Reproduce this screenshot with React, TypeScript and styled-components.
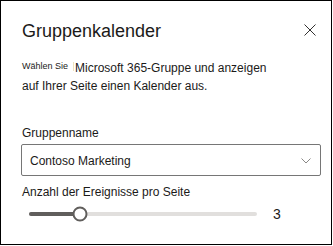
import React from "react";
import styled, { createGlobalStyle } from "styled-components";

const Global = createGlobalStyle`
  html, body { margin: 0; padding: 0; background: #fff; }
  body { font-family: "Liberation Sans", Arial, sans-serif; color: #1b1a19; }
`;

const Panel = styled.div`
  box-sizing: border-box;
  width: 332px;
  height: 245px;
  border: 1px solid #000;
  padding: 19px 10px 0 20px;
  display: flex;
  flex-direction: column;
`;

const Header = styled.div`
  display: flex;
  align-items: center;
  justify-content: space-between;
  height: 22px;
`;

const Title = styled.h1`
  margin: 0;
  font-size: 18px;
  line-height: 22px;
  font-weight: 400;
  color: #1b1a19;
  padding-left: 1px;
`;

const CloseButton = styled.button`
  width: 20px;
  height: 20px;
  border: 0;
  padding: 0;
  margin: -2px 1px 0 0;
  background: transparent;
  display: flex;
  align-items: center;
  justify-content: center;
  color: #323130;
`;

const Description = styled.div`
  margin: 17px 0 0 0;
  padding-left: 1px;
  width: 260px;
  font-size: 12px;
  line-height: 18px;
`;

const FirstLine = styled.div`
  display: flex;
  align-items: flex-start;
  height: 18px;
`;

const Small = styled.span`
  font-size: 9px;
  line-height: 9px;
  margin-top: 3px;
`;

const Caret = styled.span`
  width: 1px;
  height: 9px;
  background: #eee3c0;
  margin: 3px 1px 0 5px;
`;

const Label = styled.div<{ $top: number }>`
  margin-top: ${(p) => p.$top}px;
  font-size: 12px;
  line-height: 16px;
  padding-left: 1px;
`;

const Dropdown = styled.div`
  box-sizing: border-box;
  margin-top: 3px;
  height: 32px;
  border: 1px solid #767676;
  border-radius: 2px;
  display: flex;
  align-items: center;
  justify-content: space-between;
  padding: 2px 9px 0 8px;
  font-size: 12px;
`;

const SliderRow = styled.div`
  display: flex;
  align-items: center;
  margin-top: 5px;
  padding-left: 8px;
  height: 18px;
`;

const Track = styled.div`
  position: relative;
  width: 228px;
  height: 4px;
  border-radius: 2px;
  background: #e1dfdd;
`;

const Fill = styled.div`
  height: 100%;
  border-radius: 2px;
  background: #605e5c;
`;

const Thumb = styled.div`
  position: absolute;
  top: 50%;
  width: 15px;
  height: 15px;
  box-sizing: border-box;
  border: 2px solid #605e5c;
  border-radius: 50%;
  background: #fff;
  transform: translate(-50%, -50%);
`;

const Value = styled.span`
  margin-left: 16px;
  font-size: 14px;
  line-height: 18px;
`;

const min = 1;
const max = 10;
const value = 3;

export default function App() {
  const pct = ((value - min) / (max - min)) * 100;
  return (
    <>
      <Global />
      <Panel>
        <Header>
          <Title>Gruppenkalender</Title>
          <CloseButton aria-label="Schließen">
            <svg width="12" height="12" viewBox="0 0 12 12">
              <path d="M0.5 0.5 L11.5 11.5 M11.5 0.5 L0.5 11.5" stroke="#323130" strokeWidth="1" fill="none" />
            </svg>
          </CloseButton>
        </Header>
        <Description>
          <FirstLine>
            <Small>Wählen Sie</Small>
            <Caret />
            <span>Microsoft 365-Gruppe und anzeigen</span>
          </FirstLine>
          <div>auf Ihrer Seite einen Kalender aus.</div>
        </Description>
        <Label $top={30}>Gruppenname</Label>
        <Dropdown>
          <span>Contoso Marketing</span>
          <svg width="10" height="6" viewBox="0 0 10 6">
            <path d="M0.5 0.5 L5 5 L9.5 0.5" stroke="#8a8886" strokeWidth="1" fill="none" />
          </svg>
        </Dropdown>
        <Label $top={8}>Anzahl der Ereignisse pro Seite</Label>
        <SliderRow>
          <Track>
            <Fill style={{ width: `${pct}%` }} />
            <Thumb style={{ left: `${pct}%` }} />
          </Track>
          <Value>{value}</Value>
        </SliderRow>
      </Panel>
    </>
  );
}
